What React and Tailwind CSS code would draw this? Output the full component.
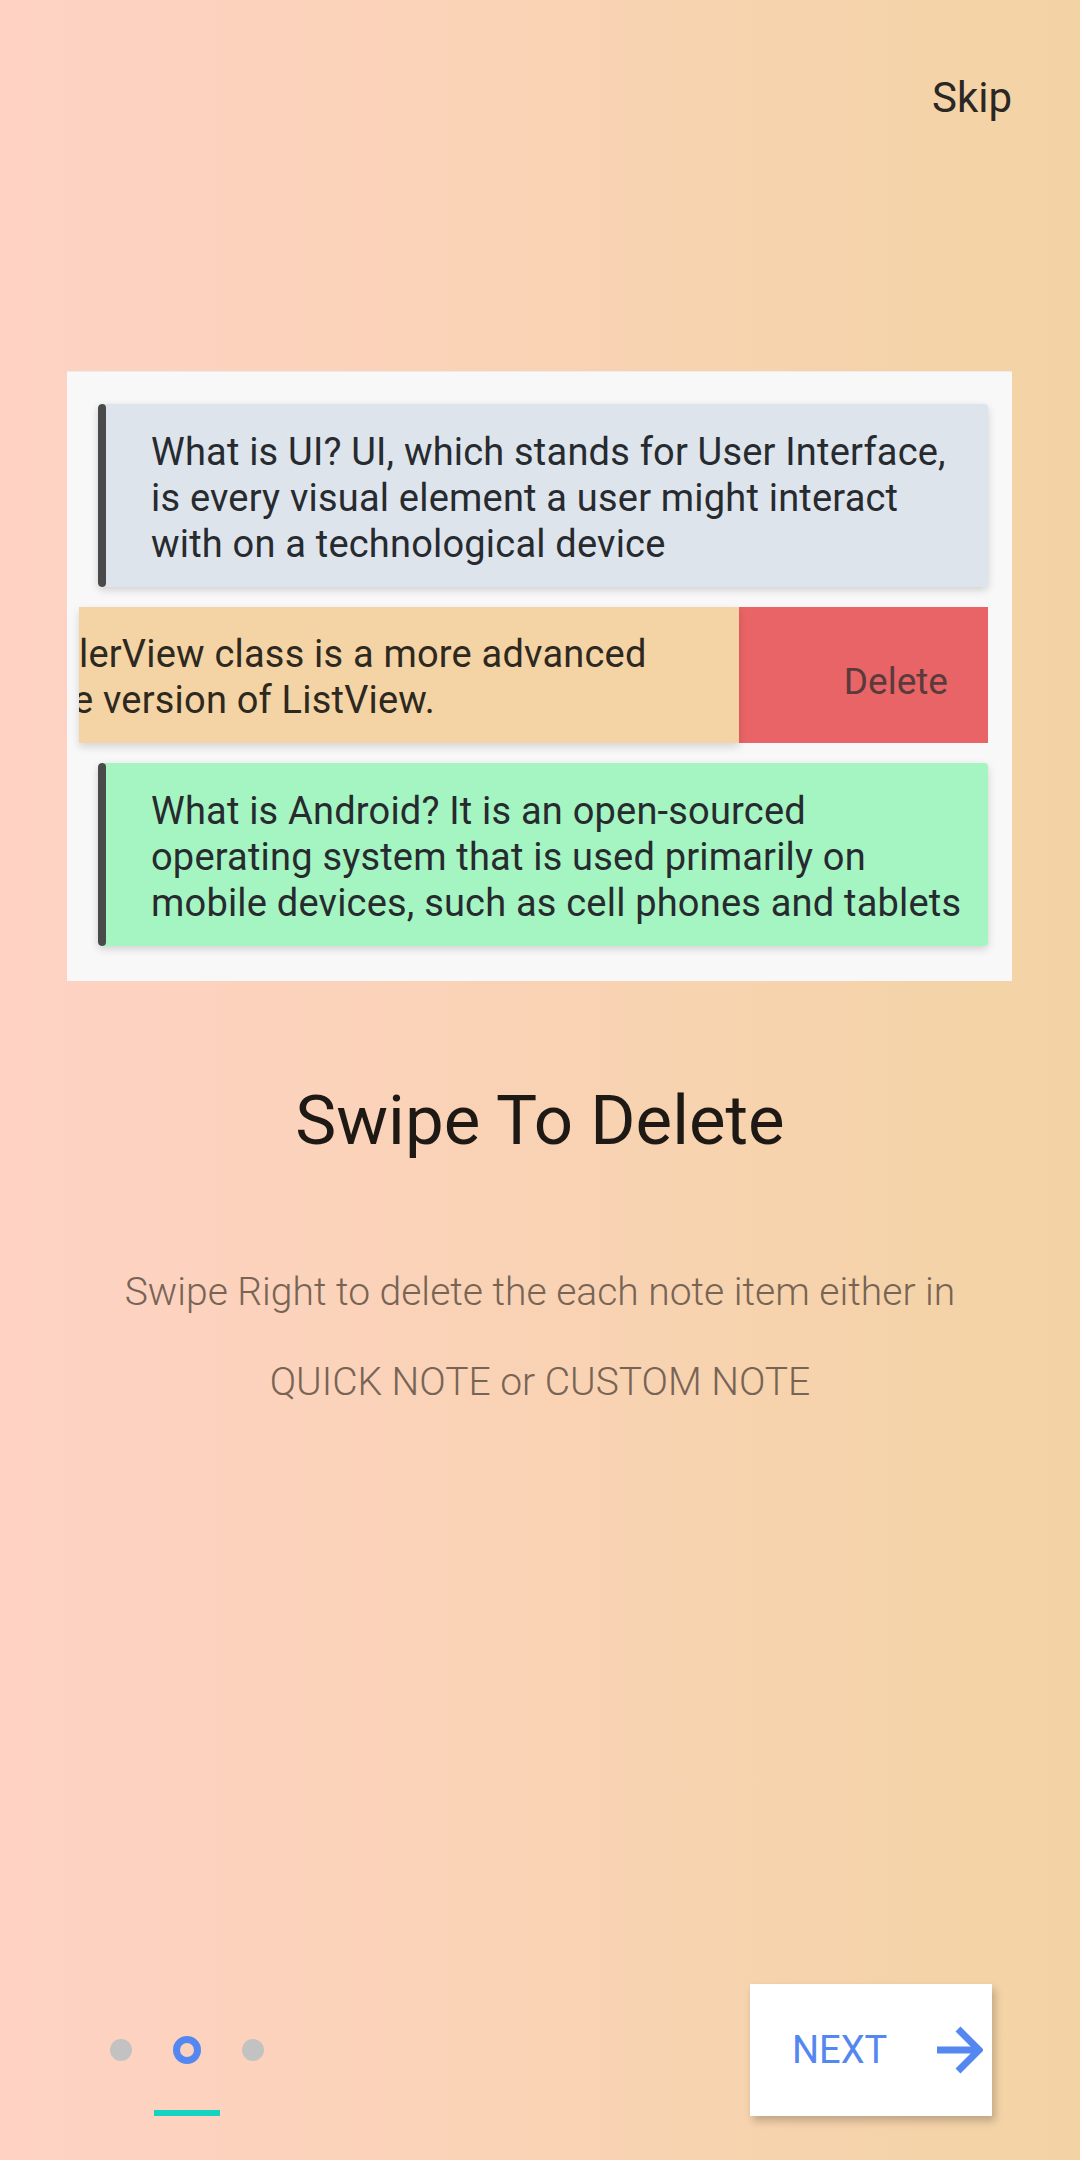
import React from 'react';

const NoteCard = ({ bg, lines }) => (
  <div
    className={`ml-[31px] w-[890px] flex rounded-[4px] overflow-hidden shadow-[0_3px_8px_rgba(0,0,0,0.16)] ${bg}`}
  >
    <div className="w-[8px] shrink-0 bg-[#4a4a4a] rounded-[4px]" />
    <div className="pl-[45px] pt-[25px] pb-[20px] text-[38px] leading-[46px] tracking-[0.2px] text-[#272a2e]">
      {lines.map((l) => (
        <div key={l} className="whitespace-nowrap">
          {l}
        </div>
      ))}
    </div>
  </div>
);

const ArrowRight = () => (
  <svg width="46" height="48" viewBox="0 0 46 48" fill="none" className="ml-auto mr-[9px]">
    <path d="M0 24 H41" stroke="#5587f0" strokeWidth="7" />
    <path d="M21 3 L42 24 L21 45" stroke="#5587f0" strokeWidth="7" strokeLinejoin="miter" />
  </svg>
);

export default function App() {
  return (
    <div
      className="w-[1080px] h-[2160px] flex flex-col bg-gradient-to-r from-[#ffd2c4] to-[#f3d3a4]"
      style={{ fontFamily: 'Roboto, "Liberation Sans", sans-serif' }}
    >
      {/* skip */}
      <div className="flex justify-end pt-[77px] pr-[68px]">
        <span className="text-[42px] leading-[42px] text-[#2b2824]">Skip</span>
      </div>

      {/* preview panel */}
      <div className="mt-[252px] ml-[67px] w-[945px] h-[610px] bg-[#f8f8f8] pt-[32px] flex flex-col gap-[20px] border-t border-[#ececec]">
        <NoteCard
          bg="bg-[#dde4ec]"
          lines={[
            'What is UI? UI, which stands for User Interface,',
            'is every visual element a user might interact',
            'with on a technological device',
          ]}
        />

        <div className="ml-[12px] w-[909px] flex h-[136px]">
          <div className="w-[660px] bg-[#f4d3a4] overflow-hidden pt-[24px] pb-[19px] text-[38px] leading-[46px] tracking-[0.2px] text-[#2d2820] shadow-[0_4px_8px_rgba(0,0,0,0.14)] z-10">
            <div className="whitespace-nowrap">lerView class is a more advanced</div>
            <div className="whitespace-nowrap -ml-[6px]">e version of ListView.</div>
          </div>
          <div className="flex-1 bg-[#e96466] flex items-center justify-end pr-[40px] pt-[13px]">
            <span className="text-[37px] leading-[37px] text-[#5a3b3c]">Delete</span>
          </div>
        </div>

        <NoteCard
          bg="bg-[#a4f5c1]"
          lines={[
            'What is Android? It is an open-sourced',
            'operating system that is used primarily on',
            'mobile devices, such as cell phones and tablets',
          ]}
        />
      </div>

      {/* title and description */}
      <h1 className="mt-[105px] text-center text-[69px] leading-[69px] text-[#1e1915]">Swipe To Delete</h1>
      <div className="mt-[92px] text-center text-[39px] leading-[90px] font-light text-[#786455]">
        <p>Swipe Right to delete the each note item either in</p>
        <p>QUICK NOTE or CUSTOM NOTE</p>
      </div>

      <div className="flex-1" />

      {/* bottom bar */}
      <div className="h-[132px] mb-[44px] flex items-start justify-between">
        <div className="pl-[110px] pt-[52px] flex flex-col">
          <div className="h-[28px] flex items-center gap-[41px]">
            <span className="w-[22px] h-[22px] rounded-full bg-[#c2c2c2]" />
            <span className="w-[28px] h-[28px] rounded-full border-[7px] border-[#5587f0]" />
            <span className="w-[22px] h-[22px] rounded-full bg-[#c2c2c2]" />
          </div>
          <div className="mt-[46px] ml-[44px] w-[66px] h-[6px] bg-[#12d4c1]" />
        </div>

        <button className="mr-[88px] w-[242px] h-[132px] bg-white flex items-center pl-[42px] shadow-[3px_5px_8px_rgba(0,0,0,0.22)]">
          <span className="text-[38px] leading-[38px] text-[#5587f0]">NEXT</span>
          <ArrowRight />
        </button>
      </div>
    </div>
  );
}
